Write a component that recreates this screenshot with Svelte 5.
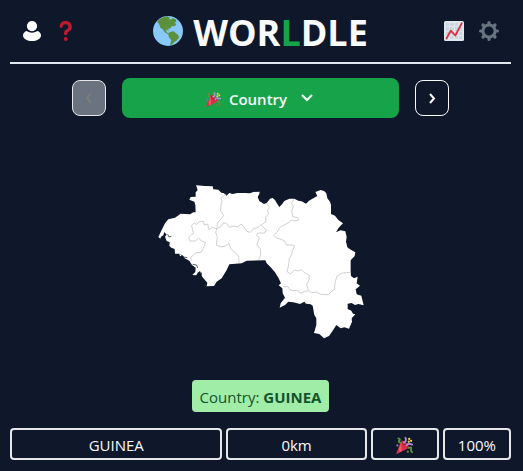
<script>
  const guess = { name: 'GUINEA', distance: '0km', proximity: '100%' };
  const regions = [
    'M229 57L218 65L212 70L216 77L213 90L212 107L221 121L211 134L202 144L201 157',
    'M120 198L116 188L124 179L131 176L127 163L125 151L133 144L140 148L150 139L160 139L163 150L173 147L177 164L187 158L200 161L213 155L221 143L231 147L239 157L251 153L263 156L273 147L282 155L290 169L301 172L311 161L324 157L334 148',
    'M201 159L197 172L202 185L199 210L213 216L226 213L237 205L242 221L258 235L266 244L267 264',
    'M120 198L136 198L146 190L156 199L167 202L161 217L153 232L137 233L130 241L122 246L124 256',
    'M350 84L358 97L353 107L355 118L347 126L348 139L334 151L340 157L349 165L344 174L324 174L319 180L328 188L320 210L331 221L332 240L326 255',
    'M431 72L425 85L430 95L425 107L428 125L442 128L446 135L435 138L424 136L414 144L397 153L388 159L381 172L371 182L380 189L391 192L404 198L409 210L425 210L434 213L427 227L425 239L418 251L415 274L411 290L422 297L433 285L444 288L453 284L465 294L478 301L477 315L470 328L475 345',
    'M398 335L414 335L420 344L430 347L443 346L450 355L463 350L475 347L485 353L500 351L512 358L535 359L544 350L554 343L555 323L561 303L577 294L601 292'
  ];
</script>

{#snippet party(size)}
  <svg class="icon" width={size} height={size} viewBox="0 0 36 36" aria-label="Correct">
    <path fill="#dd2e44" d="M11 8L1 34Q0 37 4 35L28 23Q27 16 20 11Q14 6 11 8Z" />
    <path fill="#ea596e" d="M11 11L6 26L8 32L12 30Z" />
    <path fill="#be1931" d="M11 8Q12 16 19 20T28 23Q25 18 19 14Q13 9 11 8Z" />
    <g fill="none" stroke-linecap="round" stroke-width="4">
      <path stroke="#aa8dd8" d="M17 12Q23 9 20 2M22 18Q26 12 34 16" />
      <path stroke="#5c913b" d="M5 3Q10 4 7 7T9 12M27 23Q33 20 32 25T34 32" />
    </g>
    <g fill="#ffcc4d"><circle cx="28" cy="4" r="2.4" /><circle cx="32" cy="8" r="2.4" /><circle cx="27" cy="10" r="2.4" /></g>
    <circle fill="#9266cc" cx="3" cy="18" r="2.4" />
    <circle fill="#5c913b" cx="25" cy="31" r="2.4" />
  </svg>
{/snippet}

<main>
  <header>
    <nav>
      <button class="plain" aria-label="Profile">
        <svg class="icon" width="20" height="20" viewBox="0 0 20 20" fill="#fff"><circle cx="10" cy="5.1" r="5.1" /><path d="M4.5 10Q10 13.6 15.5 10Q19 11.5 19 14.5C19 18 14.5 20 10 20S1 18 1 14.5Q1 11.5 4.5 10Z" /></svg>
      </button>
      <button class="plain" aria-label="Help">
        <svg class="icon" width="20" height="20" viewBox="0 0 36 36"><g fill="#be1931"><path d="M17 0C11 0 7 4 6.5 9.5C6.5 13 11.5 13.5 12 10C12.6 6.9 14.5 5.8 17.3 5.8C20.2 5.8 22.2 7.4 22.2 10.3C22.2 13 20.5 14.2 18.5 15.3C15.8 16.8 14.4 18.6 14.4 22.5C14.4 26.5 20.6 26.5 20.6 22.7C20.6 20.8 21.3 20.3 23.2 19.1C26.5 17.1 28.5 14.4 28.5 10.3C28.5 4.1 23.9 0 17 0Z" /><circle cx="17.5" cy="32.5" r="3.5" /></g></svg>
      </button>
    </nav>
    <h1>
      <svg class="icon" width="30" height="30" viewBox="0 0 90 90" aria-hidden="true">
        <circle cx="45" cy="45" r="45" fill="#88c9f9" />
        <path fill="#5c913b" d="M12 17Q24 4 42 1L51 5L47 10L57 10L59 5L69 11L70 17L65 20L70 25L65 31L56 31L51 38L44 38L39 44L44 51L49 52L45 55L35 49L29 40L22 35L18 23ZM50 48L62 46L76 58L78 65L70 75L64 78L56 86L51 86L55 73L47 62L46 54ZM42 38L49 43L44 45Z" />
      </svg>
      <span class="word">WOR<span class="accent">L</span>DLE</span>
    </h1>
    <nav class="end">
      <button class="plain" aria-label="Statistics">
        <svg class="icon" width="20" height="20" viewBox="0 0 20 20"><rect width="20" height="20" rx="1.5" fill="#e1e8ed" /><path fill="#ccd6dd" d="M2 2h3v3H2zM6 2h4v3H6zM11 2h3v3h-3zM2 6h3v4H2zM6 6h4v4H6zM11 6h3v4h-3zM15 6h3v4h-3zM2 11h3v3H2zM6 11h4v3H6zM11 11h3v3h-3zM15 11h3v3h-3zM6 15h4v3H6zM11 15h3v3h-3zM15 15h3v3h-3z" /><path fill="none" stroke="#dd2e44" stroke-width="1.8" stroke-linejoin="round" stroke-linecap="round" d="M2.5 17.5L6.7 9.7L11.3 14.5L17.8 2.2" /></svg>
      </button>
      <button class="plain" aria-label="Settings">
        <svg class="icon" width="20" height="20" viewBox="-10 -10 20 20"><g fill="none" stroke="#66757f"><circle r="6.1" stroke-width="3" /><path stroke-width="3.2" stroke-linecap="round" d="M0-8.4V-7M0 7V8.4M-8.4 0H-7M7 0H8.4M-6-6L-5-5M5 5L6 6M-6 6L-5 5M5-5L6-6" /></g></svg>
      </button>
    </nav>
  </header>

  <div class="picker">
    <button class="step" disabled aria-label="Previous round"><svg class="icon" width="16" height="16" viewBox="0 0 16 16"><path d="M10 3L6 8L10 13" /></svg></button>
    <button class="round">
      {@render party(15)}
      <span>Country</span>
      <svg class="icon chevron" width="16" height="16" viewBox="0 0 16 16"><path d="M3 5L8 10L13 5" /></svg>
    </button>
    <button class="step" aria-label="Next round"><svg class="icon" width="16" height="16" viewBox="0 0 16 16"><path d="M6 4L10 8.5L6 13" /></svg></button>
  </div>

  <svg class="map" viewBox="3 0 660 510" role="img" aria-label="Country outline">
    <path fill="#fff" d="M138 31L165 33L188 34L190 43L205 44L214 53L222 55L229 62L238 54L248 57L262 54L285 54L300 55L310 51L329 50L328 57L323 66L328 78L342 87L350 84L360 71L368 69L375 75L380 84L388 96L396 88L403 78L418 71L433 71L445 77L455 79L468 86L477 77L495 67L502 63L496 51L512 45L522 48L529 55L532 70L540 80L543 90L543 117L555 122L565 135L579 145L566 158L558 172L572 166L586 169L590 185L588 200L592 217L600 223L616 232L614 243L602 256L602 290L603 303L612 310L623 305L620 325L630 332L617 343L620 358L634 362L641 391L625 387L615 390L605 384L593 386L593 402L604 407L609 416L616 418L605 430L606 440L597 461L583 457L572 460L559 450L548 467L537 483L522 490L508 477L492 474L499 450L499 430L493 420L488 392L482 388L468 386L463 380L450 387L430 382L415 380L405 390L389 398L392 385L405 368L398 355L397 340L386 331L393 325L386 310L375 292L362 277L350 265L346 256L290 257L275 265L238 268L230 285L215 310L200 320L192 333L170 334L172 323L157 306L150 288L143 293L139 301L127 300L136 291L137 278L126 270L118 257L104 250L98 241L90 244L88 236L75 236L74 222L64 218L58 213L59 202L50 198L45 185L50 179L43 171L40 181L33 185L31 191L25 186L35 165L45 145L55 133L75 128L92 116L120 118L130 112L137 112L136 90L133 80L118 74L122 66L137 65L137 52L143 45Z" />
    <path fill="none" stroke="#0f172a" stroke-width="2" d="M53 178L57 186L64 184M92 238L100 246L112 248M128 268L140 270L143 279M154 292L155 300" />
    {#each regions as region}
      <path class="border" d={region} />
    {/each}
  </svg>

  <div class="answer"><p>Country: <strong>{guess.name}</strong></p></div>

  <div class="guess">
    <div class="name">{guess.name}</div>
    <div class="distance">{guess.distance}</div>
    <div>{@render party(17)}</div>
    <div>{guess.proximity}</div>
  </div>
</main>

<style>
  :global(body) { margin: 0; background: #0f172a; }
  main {
    box-sizing: border-box;
    max-width: 534px;
    margin: 0 auto;
    padding: 0 12px 11px 10px;
    color: #f8fafc;
    font: 15px/24px "Open Sans", "Noto Sans", sans-serif;
  }
  .icon { display: block; flex: none; }
  button { font: inherit; color: inherit; padding: 0; }
  header {
    display: flex;
    align-items: center;
    height: 62px;
    border-bottom: 2px solid #e2e8f0;
  }
  nav { flex: 1; display: flex; gap: 14px; padding: 0 12px; }
  .end { justify-content: flex-end; gap: 15px; }
  .plain { border: 0; background: none; }
  h1 {
    display: flex;
    align-items: center;
    gap: 10px;
    margin: 0;
    font-size: 36px;
    line-height: 40px;
    font-weight: 700;
  }
  .word { padding-top: 4px; }
  .accent { color: #16a34a; }
  .picker {
    display: flex;
    align-items: center;
    justify-content: center;
    gap: 16px;
    margin: 14px 62px 0;
  }
  .step {
    display: grid;
    place-items: center;
    box-sizing: border-box;
    width: 34px;
    height: 36px;
    border: 1px solid #f8fafc;
    border-radius: 8px;
    background: none;
  }
  .step:disabled { background: #6b7280; color: #7f7d7b; border-color: #e5e7eb; }
  .step path, .chevron path { fill: none; stroke: currentColor; stroke-width: 2; }
  .round {
    flex: 1;
    display: flex;
    align-items: center;
    justify-content: center;
    gap: 8px;
    height: 40px;
    padding-top: 2px;
    border: 0;
    border-radius: 8px;
    background: #16a34a;
    font-weight: 600;
  }
  .chevron { margin: 0 0 2px 4px; }
  .map { display: block; width: 220px; margin: 57px auto 35px; }
  .border { fill: none; stroke: #b8bac0; stroke-width: 2; }
  .answer { display: flex; justify-content: center; }
  .answer p {
    margin: 0;
    padding: 5px 8px 3px;
    border-radius: 4px;
    background: #a0eda8;
    color: #14532d;
  }
  .guess {
    display: grid;
    grid-template-columns: repeat(7, 1fr);
    gap: 4px;
    margin-top: 16px;
  }
  .guess div {
    display: flex;
    align-items: center;
    justify-content: center;
    box-sizing: border-box;
    height: 32px;
    padding-top: 2px;
    border: 2px solid #e5e7eb;
    border-radius: 4px;
  }
  .guess .name { grid-column: span 3; }
  .guess .distance { grid-column: span 2; }
</style>
